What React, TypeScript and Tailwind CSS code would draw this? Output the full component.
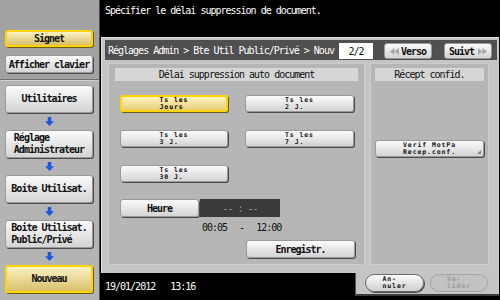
import React from "react";

const mono = "font-['DejaVu_Sans_Mono','Liberation_Mono',monospace] text-[10px] tracking-[-1px]";
const monoB = "font-['DejaVu_Sans_Mono','Liberation_Mono',monospace] text-[10px] tracking-[-1px] font-bold";
const tiny = "font-['DejaVu_Sans_Mono','Liberation_Mono',monospace] text-[6.5px] leading-[7px] font-bold tracking-[0.9px] text-left";

const grayBtn =
  "bg-gradient-to-b from-[#fbfbfb] to-[#d4d4d4] border border-[#9a9a9a] shadow-[1px_1px_0_#4a4a4a] rounded-[3px] text-[#111]";
const yellowBtn =
  "bg-gradient-to-b from-[#fbf2c4] to-[#d8bf6a] border-2 border-[#ffd400] shadow-[1px_1px_0_#6a5a20] rounded-[3px] text-[#111]";

function Arrow() {
  return (
    <div className="h-[17px] flex items-center justify-center">
      <svg width="9" height="9" viewBox="0 0 9 9">
        <path d="M2.7 0h3.6v4.2h2.7L4.5 9 0 4.2h2.7z" fill="#1e56e6" />
      </svg>
    </div>
  );
}

function SideBtn({ children, yellow }: { children: React.ReactNode; yellow?: boolean }) {
  return (
    <div className={`h-[28px] w-[88px] flex items-center justify-center ${yellow ? yellowBtn : grayBtn}`}>
      <div className={`${monoB} leading-[12px] text-left`}>{children}</div>
    </div>
  );
}

function SmallBtn({ l1, l2, yellow }: { l1: string; l2: string; yellow?: boolean }) {
  return (
    <div className={`h-[17px] flex items-center justify-center ${yellow ? "bg-gradient-to-b from-[#fff4c0] to-[#e7cf78] border-2 border-[#ffd400] shadow-[1px_1px_0_#6a5a20] rounded-[3px]" : grayBtn}`}>
      <div className={tiny}>
        <div>{l1}</div>
        <div>{l2}</div>
      </div>
    </div>
  );
}

export default function App() {
  return (
    <div className="w-[500px] h-[300px] flex overflow-hidden bg-black">
      {/* Sidebar */}
      <div className="w-[100px] h-[300px] flex flex-col border-r border-[#4a4a4a]">
        <div className="h-[80px] bg-[#a2a2a2] pt-[30px] px-[5px] flex flex-col gap-[8px] border-b border-[#6e6e6e]">
          <div className={`h-[17px] w-[88px] flex items-center justify-center ${yellowBtn}`}>
            <span className={monoB}>Signet</span>
          </div>
          <div className={`h-[18px] w-[88px] flex items-center justify-center ${grayBtn}`}>
            <span className={monoB}>Afficher clavier</span>
          </div>
        </div>
        <div className="flex-1 bg-[#b4b4b4] border-t border-[#cfcfcf] pt-[4px] px-[5px] flex flex-col">
          <SideBtn>Utilitaires</SideBtn>
          <Arrow />
          <SideBtn>
            Réglage
            <br />
            Administrateur
          </SideBtn>
          <Arrow />
          <SideBtn>Boite Utilisat.</SideBtn>
          <Arrow />
          <SideBtn>
            Boite Utilisat.
            <br />
            Public/Privé
          </SideBtn>
          <Arrow />
          <SideBtn yellow>Nouveau</SideBtn>
        </div>
      </div>

      {/* Right area */}
      <div className="w-[399px] h-[300px] flex flex-col bg-black">
        <div className={`h-[37px] pl-[5px] pt-[3px] text-white ${mono}`}>
          Spécifier le délai suppression de document.
        </div>
        <div className="ml-[1px] w-[398px] h-[236px] bg-[#c5c5c5] border-l border-t border-[#e2e2e2] pt-[2px] pl-[3px] flex flex-col">
          {/* Title bar */}
          <div className="h-[20px] w-[392px] bg-[#505050] flex items-end">
            <div className={`w-[234px] h-[20px] pl-[3px] flex items-center overflow-hidden whitespace-nowrap text-white ${mono}`}>
              Réglages Admin &gt; Bte Util Public/Privé &gt; Nouv
            </div>
            <div className={`w-[34px] h-[16px] mb-[1px] bg-white flex items-center justify-center text-[#111] ${mono}`}>2/2</div>
            <div className={`ml-[11px] mb-[1px] w-[48px] h-[16px] flex items-center justify-center gap-[2px] ${grayBtn}`}>
              <svg width="9" height="7" viewBox="0 0 9 7">
                <path d="M4.5 0v7L0 3.5z M9 0v7L4.5 3.5z" fill="#a8a8a8" />
              </svg>
              <span className={monoB}>Verso</span>
            </div>
            <div className={`ml-[12px] mb-[1px] w-[48px] h-[16px] flex items-center justify-center gap-[4px] ${grayBtn}`}>
              <span className={monoB}>Suivt</span>
              <svg width="9" height="7" viewBox="0 0 9 7">
                <path d="M0 0v7l4.5-3.5z M4.5 0v7L9 3.5z" fill="#a8a8a8" />
              </svg>
            </div>
          </div>

          {/* Inner panels */}
          <div className="mt-[3px] pl-[3px] flex gap-[5px]">
            <div className="w-[257px] h-[202px] bg-[#b6b6b6] border border-[#cdcdcd] pt-[4px] px-[6px]">
              <div className={`h-[13px] bg-[#d6d6d6] flex items-center justify-center text-[#111] ${mono}`}>
                Délai suppression auto document
              </div>
              <div className="mt-[14px] pl-[5px] grid grid-cols-[108px_109px] gap-x-[17px] gap-y-[18px]">
                <SmallBtn l1="Ts les" l2="Jours" yellow />
                <SmallBtn l1="Ts les" l2="2 J." />
                <SmallBtn l1="Ts les" l2="3 J." />
                <SmallBtn l1="Ts les" l2="7 J." />
                <SmallBtn l1="Ts les" l2="30 J." />
              </div>
              <div className="mt-[17px] pl-[5px] flex">
                <div className={`w-[79px] h-[18px] flex items-center justify-center ${grayBtn}`}>
                  <span className={monoB}>Heure</span>
                </div>
                <div className={`ml-[1px] w-[80px] h-[18px] bg-[#3a3a3a] flex items-center justify-center text-[#9a9a9a] ${mono}`}>
                  -- : --
                </div>
              </div>
              <div className={`mt-[3px] pl-[87px] flex text-[#111] ${mono}`}>
                <span>00:05</span>
                <span className="ml-[12px]">-</span>
                <span className="ml-[12px]">12:00</span>
              </div>
              <div className="mt-[5px] pl-[131px]">
                <div className={`w-[109px] h-[18px] flex items-center justify-center ${grayBtn}`}>
                  <span className={monoB}>Enregistr.</span>
                </div>
              </div>
            </div>
            <div className="w-[119px] h-[202px] bg-[#b6b6b6] border border-[#cdcdcd] pt-[4px] px-[4px]">
              <div className={`h-[13px] bg-[#d6d6d6] flex items-center justify-center text-[#111] ${mono}`}>
                Récept confid.
              </div>
              <div className="mt-[59px] relative">
                <SmallBtn l1="Verif MotPa" l2="Recep.conf." />
                <svg className="absolute right-[3px] bottom-[3px]" width="4" height="4" viewBox="0 0 4 4">
                  <path d="M4 0v4H0z" fill="#8a8a8a" />
                </svg>
              </div>
            </div>
          </div>
        </div>
        {/* Bottom row */}
        <div className="flex h-[23px]">
          <div className={`flex-1 pl-[5px] pt-[6px] flex gap-[15px] text-white ${mono}`}>
            <span>19/01/2012</span>
            <span>13:16</span>
          </div>
          <div className="w-[144px] h-[23px] bg-[#c5c5c5] border-l border-[#555] border-b-2 border-b-[#3a3a3a] flex items-start pt-[1px] pl-[9px] gap-[6px]">
            <div className="w-[59px] h-[18px] rounded-full bg-gradient-to-b from-[#fafafa] to-[#cfcfcf] border border-[#6a6a6a] shadow-[1px_1px_0_#4a4a4a] flex items-center justify-center text-[#111]">
              <div className={tiny}>
                <div>An-</div>
                <div>nuler</div>
              </div>
            </div>
            <div className="w-[58px] h-[18px] rounded-full bg-[#c2c2c2] border border-[#a6a6a6] flex items-center justify-center text-[#9c9c9c]">
              <div className={tiny}>
                <div>Va-</div>
                <div>lider</div>
              </div>
            </div>
          </div>
        </div>
      </div>
    </div>
  );
}
